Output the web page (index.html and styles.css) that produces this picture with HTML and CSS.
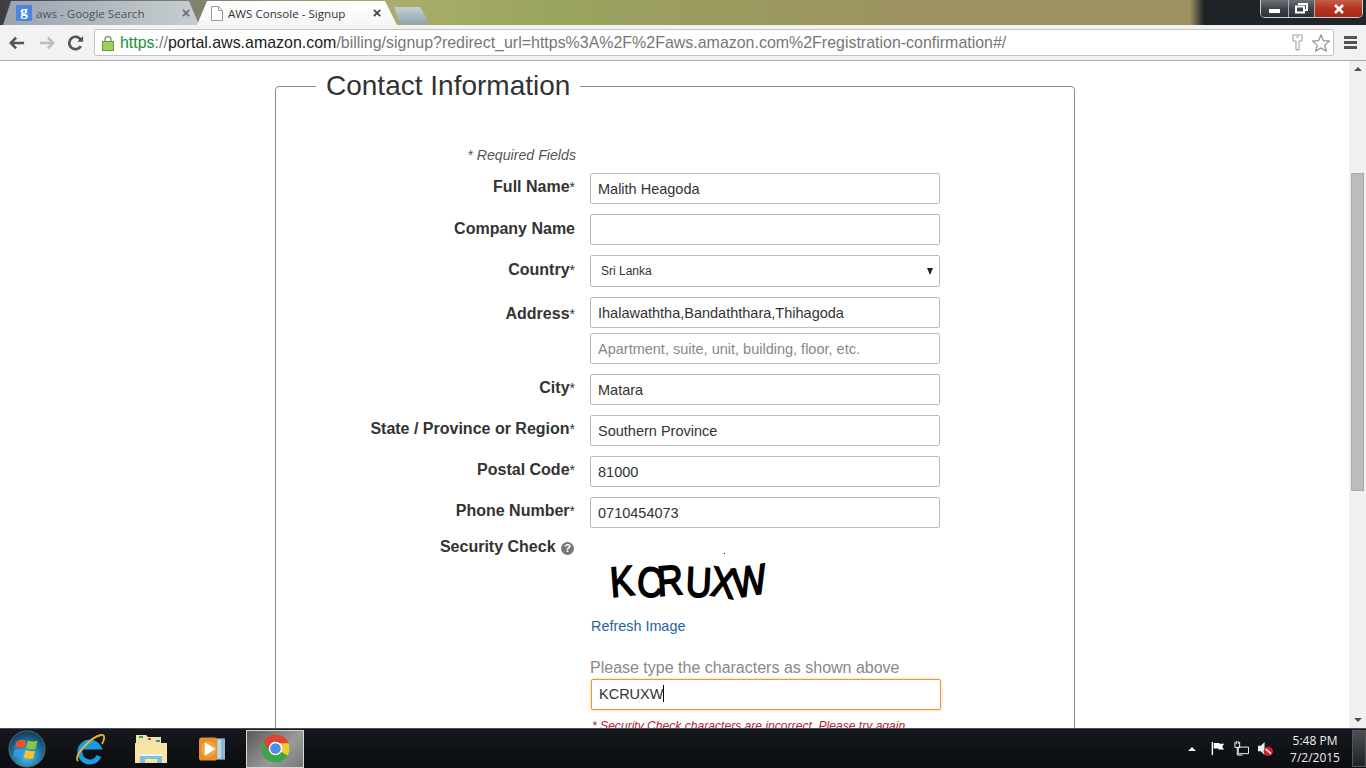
FILE: index.html
```html
<!DOCTYPE html>
<html lang="en">
<head>
  <meta charset="UTF-8" />
  <title>AWS Console - Signup</title>
  <link rel="stylesheet" href="styles.css">
</head>
<body>
  <div class="tabstrip">
    <div class="tab tab-off">
      <span class="favicon">g</span>
      <span class="tab-title">aws - Google Search</span>
      <svg class="tab-x" viewBox="0 0 10 10"><path d="M1 1l7 7M8 1l-7 7" stroke="#6b6f73" stroke-width="2"/></svg>
    </div>
    <div class="tab tab-on">
      <svg class="doc" viewBox="0 0 12 15"><path d="M.5.5h7l4 4v10H.5z" fill="#fff" stroke="#9a9a9a"/><path d="M7.5.5v4h4" fill="none" stroke="#9a9a9a"/></svg>
      <span class="tab-title">AWS Console - Signup</span>
      <svg class="tab-x" viewBox="0 0 10 10"><path d="M1 1l7 7M8 1l-7 7" stroke="#444" stroke-width="2"/></svg>
    </div>
    <div class="tab-new"></div>
    <div class="winbtns">
      <span class="winbtn win-min"><i></i></span>
      <span class="winbtn win-max"><svg width="13" height="11" viewBox="0 0 13 11"><path d="M4 2V1h8v6h-2M1 3.500h8v6H1z" fill="none" stroke="#fff" stroke-width="2"/></svg></span>
      <span class="winbtn win-close"><svg width="12" height="10" viewBox="0 0 12 10"><path d="M2 1l8 8M10 1l-8 8" stroke="#fff" stroke-width="2.600"/></svg></span>
    </div>
  </div>

  <div class="toolbar">
    <svg class="nav" viewBox="0 0 18 16"><path d="M8 2L2 8l6 6M2 8h15" fill="none" stroke="#555" stroke-width="3"/></svg>
    <svg class="nav" viewBox="0 0 18 16"><path d="M10 2l6 6-6 6M16 8H1" fill="none" stroke="#bdbdbd" stroke-width="3"/></svg>
    <svg class="nav" viewBox="0 0 18 18"><path d="M14.500 12.500a7 7 0 1 1 0-7" fill="none" stroke="#555" stroke-width="3"/><path d="M10.500 7.500H17V1z" fill="#555"/></svg>
    <div class="omnibox">
      <svg class="lock" viewBox="0 0 12 16"><path d="M3 7V4.500a3 3 0 0 1 6 0V7" fill="none" stroke="#8a9a7a" stroke-width="1.500"/><rect x=".5" y="6.500" width="11" height="9" fill="#9bd05a" stroke="#6c9a3c"/></svg>
      <span class="url"><span class="https">https</span><span class="url-dim">://</span>portal.aws.amazon.com<span class="url-dim">/billing/signup?redirect_url=https%3A%2F%2Faws.amazon.com%2Fregistration-confirmation#/</span></span>
      <svg class="key" viewBox="0 0 11 17"><path d="M1 1h9v6H7v9H4V7H1z" fill="#fff" stroke="#999"/><path d="M4 3h3" stroke="#999"/></svg>
      <svg class="star" viewBox="0 0 18 18"><path d="M9 1l2.400 5.600 6 .5-4.600 4 1.400 6L9 14l-5.200 3.100 1.400-6-4.600-4 6-.5z" fill="#fff" stroke="#8f8f8f" stroke-width="1.200"/></svg>
    </div>
    <div class="menu"><i></i><i></i><i></i></div>
  </div>

  <div class="viewport">
    <div class="page">
      <fieldset class="contact">
        <legend>Contact Information</legend>
        <p class="required">* Required Fields</p>

        <div class="row">
          <label>Full Name<small>*</small></label>
          <input class="field" type="text" value="Malith Heagoda">
        </div>
        <div class="row">
          <label class="label-low">Company Name</label>
          <input class="field" type="text">
        </div>
        <div class="row">
          <label class="label-low">Country<small>*</small></label>
          <div class="field field-select">Sri Lanka<span class="caret-down"></span></div>
        </div>
        <div class="row row-tight">
          <label class="label-address">Address<small>*</small></label>
          <input class="field" type="text" value="Ihalawaththa,Bandaththara,Thihagoda">
        </div>
        <div class="row">
          <label></label>
          <input class="field" type="text" placeholder="Apartment, suite, unit, building, floor, etc.">
        </div>
        <div class="row">
          <label>City<small>*</small></label>
          <input class="field" type="text" value="Matara">
        </div>
        <div class="row">
          <label>State / Province or Region<small>*</small></label>
          <input class="field" type="text" value="Southern Province">
        </div>
        <div class="row">
          <label>Postal Code<small>*</small></label>
          <input class="field" type="text" value="81000">
        </div>
        <div class="row">
          <label>Phone Number<small>*</small></label>
          <input class="field" type="text" value="0710454073">
        </div>
        <div class="row">
          <label class="label-check">Security Check <span class="help">?</span></label>
          <div class="check">
            <svg class="captcha" viewBox="0 0 200 70">
              <circle cx="134.500" cy="15.500" r=".6" fill="#000"/>
              <text transform="scale(.85 1)" y="59 57 58 58 57 60" stroke="#000" stroke-width="1.800" x="25 54 80 112 141 170" rotate="-5 6 -4 3 8 -8">KCRUXW</text>
            </svg>
            <a class="refresh" href="#">Refresh Image</a>
            <div class="prompt">Please type the characters as shown above</div>
            <div class="field field-focus">KCRUXW<span class="text-caret"></span></div>
            <div class="error">* Security Check characters are incorrect. Please try again.</div>
          </div>
        </div>
      </fieldset>
    </div>
    <div class="scrollbar">
      <span class="arrow arrow-up"></span>
      <div class="thumb"></div>
      <span class="arrow arrow-down"></span>
    </div>
  </div>

  <div class="taskbar">
    <svg class="orb" viewBox="0 0 40 40">
      <defs>
        <radialGradient id="orbFill" cy=".7" r=".7"><stop offset="0" stop-color="#4cc4e8"/><stop offset=".6" stop-color="#1a6f9e"/><stop offset="1" stop-color="#12344f"/></radialGradient>
      </defs>
      <circle cx="20" cy="20" r="19" fill="url(#orbFill)" stroke="#5b6b78"/>
      <path d="M9 12q5-3 10-1l-2 8q-5-2-10 0z" fill="#e8552c"/>
      <path d="M21 11q5 2 10 0l-2 9q-5 1-10-1z" fill="#8cc63f"/>
      <path d="M7 21q5-2 9.500 0l-2 8q-5-2-9.500 0z" fill="#2f9be0"/>
      <path d="M18.500 21q5 2 10 1l-2 8q-5 1-10-1z" fill="#fbc02d"/>
    </svg>
    <svg class="tb-icon tb-ie" viewBox="0 0 30 32">
      <path d="M24 23a10 10 0 1 1-.5-9H7.500" fill="none" stroke="#1b9ae0" stroke-width="5"/>
      <path d="M3 28C-2 23 16 4 26 2c5-1 3 6 1 9" fill="none" stroke="#e8b82c" stroke-width="1.800"/>
    </svg>
    <svg class="tb-icon tb-folder" viewBox="0 0 32 30">
      <path d="M1 1h10l2 2h13v8H1z" fill="#f0e2a8"/>
      <rect x="4" y="2" width="4" height="2" fill="#3aa655"/>
      <rect x="13" y="4" width="3" height="2" fill="#c8502c"/>
      <rect x="21" y="6" width="4" height="2" fill="#3a8ec8"/>
      <path d="M0 9h32v20H0z" fill="#f6e4a0"/>
      <path d="M5 29v-8h22v8h-5v-4H10v4z" fill="#86bcdc"/>
      <path d="M5 21h22" stroke="#e4f4fc" stroke-width="2"/>
    </svg>
    <svg class="tb-icon tb-media" viewBox="0 0 27 26">
      <rect x="15" y="2" width="12" height="22" fill="#8bb6d6"/>
      <rect x="15" y="3" width="8" height="20" fill="#bcd8ec"/>
      <rect x="0" y="1" width="19" height="24" rx="3" fill="#e8912c"/>
      <circle cx="10" cy="13" r="8" fill="#f4a63c"/>
      <path d="M6 6l11 7-11 7z" fill="#fff"/>
    </svg>
    <div class="tb-active">
      <svg class="tb-chrome" viewBox="0 0 30 30">
        <circle cx="15" cy="15" r="14.500" fill="#3aa648"/>
        <path d="M15 .5a14.500 14.500 0 0 1 12.600 21.700L15 15z" fill="#f6c92c"/>
        <path d="M2.400 7.800A14.500 14.500 0 0 1 28.500 9.500H15L8.500 18z" fill="#dc4437"/>
        <circle cx="15" cy="15" r="7" fill="#fff"/>
        <circle cx="15" cy="15" r="5.500" fill="#4b8bea"/>
      </svg>
    </div>
    <div class="tray">
      <span class="tray-up"></span>
      <svg class="tray-icon" viewBox="0 0 16 16"><path d="M2.500 1v14" stroke="#fff" stroke-width="1.500"/><path d="M4 2h6v1h5l-2 3 2 3H9V8H4z" fill="#fff"/></svg>
      <svg class="tray-icon" viewBox="0 0 16 16"><path d="M4.500 6.500h11v7h-11zM1 1v6h5V1M2.500 0v3M4.500 0v3M3.500 7v8H9" fill="none" stroke="#fff"/></svg>
      <svg class="tray-icon" viewBox="0 0 16 16"><path d="M0 5h3l4-4v14l-4-4H0z" fill="#eee"/><circle cx="11" cy="11" r="5" fill="#d4202a"/><path d="M8 8.500l6 5" stroke="#fff" stroke-width="1.500"/></svg>
      <div class="clock"><span>5:48 PM</span><span>7/2/2015</span></div>
      <div class="show-desktop"></div>
    </div>
  </div>
</body>
</html>
```

FILE: styles.css
```css
* {
  box-sizing: border-box;
}
html, body {
  margin: 0;
  height: 100%;
  overflow: hidden;
}
body {
  display: flex;
  flex-direction: column;
  width: 1366px;
  height: 768px;
  font-family: "Liberation Sans", Arial, sans-serif;
  color: #333;
  background: #fff;
}

/* tab strip */
.tabstrip {
  display: flex;
  align-items: flex-end;
  flex: none;
  height: 25px;
  padding-left: 3px;
  background: linear-gradient(to right, #3b3d40 0, #6e7270 120px, #a9ad6c 400px, #9aa35f 560px, #9c9360 900px, #9d9160 1190px, #1d2227 1204px, #20262b 1366px);
}
.tab {
  display: flex;
  align-items: center;
  height: 24px;
  font-family: "Open Sans", "Noto Sans", sans-serif;
  font-size: 11.600px;
  white-space: nowrap;
}
.tab-off {
  width: 196px;
  padding: 0 8px 0 13px;
  color: #555;
  background: linear-gradient(to right, #9aa3b0, #c7ced1);
  clip-path: polygon(0 100%, 8px 0, 186px 0, 100% 100%);
}
.tab-on {
  width: 200px;
  margin-left: -2px;
  padding: 0 15px 0 14px;
  color: #333;
  background: linear-gradient(#fff, #f6f6f6);
  clip-path: polygon(0 100%, 10px 0, 188px 0, 100% 100%);
}
.favicon {
  width: 16px;
  height: 16px;
  margin-right: 4px;
  border-radius: 1px;
  font: bold 15px/13px "Liberation Serif", serif;
  text-align: center;
  color: #fff;
  background: #4a86e0;
}
.doc {
  width: 12px;
  height: 15px;
  margin-right: 5px;
}
.tab-title {
  flex: 1;
}
.tab-x {
  width: 9px;
  height: 9px;
}
.tab-new {
  width: 36px;
  height: 17px;
  margin: 0 0 1px -3px;
  background: linear-gradient(#c4d0d6, #8ea6ae);
  clip-path: polygon(6px 100%, 0 0, 26px 0, 100% 100%);
}
.winbtns {
  display: flex;
  align-self: flex-start;
  height: 18px;
  margin: 0 3px 0 auto;
  border: 1px solid #c8cdd2;
  border-top: 0;
  border-radius: 0 0 5px 5px;
  overflow: hidden;
}
.winbtn {
  display: flex;
  align-items: center;
  justify-content: center;
  height: 100%;
  background: linear-gradient(#6b7177, #3f454b 50%, #2b3035);
}
.win-min {
  width: 28px;
  border-right: 1px solid #aab;
}
.win-min i {
  width: 11px;
  height: 4px;
  margin-top: 4px;
  background: #fff;
}
.win-max {
  width: 26px;
  border-right: 1px solid #aab;
}
.win-close {
  width: 47px;
  background: linear-gradient(#c2604c, #b83220 50%, #a82a18);
}

/* address bar row */
.toolbar {
  display: flex;
  align-items: center;
  flex: none;
  height: 36px;
  padding: 0 9px;
  background: #f2f2f2;
  border-bottom: 1px solid #a8a8a8;
}
.nav {
  flex: none;
  width: 16px;
  height: 16px;
  margin-right: 14px;
}
.nav:nth-child(2) {
  margin-right: 13px;
}
.nav:nth-child(3) {
  margin-right: 10px;
}
.omnibox {
  display: flex;
  align-items: center;
  flex: none;
  width: 1240px;
  height: 27px;
  padding: 0 3px 0 7px;
  background: #fff;
  border: 1px solid #c4c4c4;
  border-radius: 2px;
}
.lock {
  width: 12px;
  height: 16px;
  margin-right: 6px;
}
.url {
  flex: 1;
  font-size: 15.960px;
  white-space: nowrap;
  color: #222;
}
.https {
  color: #1f8f3a;
}
.url-dim {
  color: #777;
}
.key {
  width: 11px;
  height: 17px;
  margin-right: 9px;
}
.star {
  width: 18px;
  height: 18px;
}
.menu {
  display: flex;
  flex-direction: column;
  gap: 2px;
  margin-left: 10px;
}
.menu i {
  width: 13px;
  height: 3px;
  background: #555;
}

/* page */
.viewport {
  display: flex;
  flex: 1;
  min-height: 0;
}
.page {
  flex: 1;
  overflow: hidden;
  background: #fff;
}
.contact {
  width: 800px;
  margin: 9px 0 0 275px;
  padding: 0 0 40px;
  border: 1px solid #8c8c8c;
  border-radius: 4px;
}
.contact legend {
  margin-left: 40px;
  padding: 0 10px;
  font-size: 28px;
  line-height: 32px;
  font-weight: normal;
}
.required {
  width: 300px;
  margin: 43px 0 8px;
  font-size: 14.200px;
  line-height: 20px;
  font-style: italic;
  text-align: right;
  color: #555;
}
.row {
  display: flex;
  gap: 15px;
  margin-bottom: 10px;
}
.row-tight {
  margin-bottom: 5px;
}
.row label {
  flex: none;
  width: 299px;
  padding-top: 4px;
  font-size: 16px;
  line-height: 20px;
  font-weight: bold;
  text-align: right;
}
.row small {
  font-size: 14px;
  font-weight: normal;
}
.row .label-low {
  padding-top: 5px;
}
.row .label-address {
  padding-top: 7px;
}
.row .label-check {
  padding: 1px 1px 0 0;
  line-height: 16px;
}
.help {
  display: inline-block;
  width: 13px;
  height: 13px;
  margin-left: 1px;
  border-radius: 50%;
  font-size: 11px;
  line-height: 13px;
  text-align: center;
  color: #fff;
  background: #777;
}
.field {
  display: block;
  width: 350px;
  height: 31px;
  padding: 0 7px;
  font-family: inherit;
  font-size: 14.500px;
  line-height: 29px;
  color: #333;
  background: #fff;
  border: 1px solid #bbb;
  border-radius: 2px;
  outline: none;
}
.field::placeholder {
  color: #888;
  opacity: 1;
}
.field-select {
  position: relative;
  height: 32px;
  padding-left: 10px;
  font-size: 12px;
  line-height: 31px;
}
.caret-down {
  position: absolute;
  top: 12px;
  right: 6px;
  border: 3.500px solid transparent;
  border-top: 7px solid #222;
  border-bottom: 0;
}
.check {
  display: flex;
  flex-direction: column;
  align-items: flex-start;
}
.captcha {
  width: 200px;
  height: 70px;
  font-family: "Liberation Sans", sans-serif;
  font-size: 42px;
}
.refresh {
  margin: 8px 0 0 1px;
  font-size: 14.400px;
  line-height: 20px;
  color: #2a5f9e;
  text-decoration: none;
}
.prompt {
  margin-top: 22px;
  font-size: 16px;
  line-height: 20px;
  color: #888;
}
.field-focus {
  margin: 1px 0 0 1px;
  border-color: #e59a3c;
  box-shadow: 0 0 3px #f0c080;
}
.text-caret {
  display: inline-block;
  width: 1px;
  height: 17px;
  vertical-align: -3px;
  background: #000;
}
.error {
  margin: 6px 0 0 2px;
  font-size: 12.100px;
  line-height: 20px;
  font-style: italic;
  color: #b3262a;
}

/* scrollbar */
.scrollbar {
  display: flex;
  flex-direction: column;
  align-items: center;
  flex: none;
  width: 17px;
  background: #f0f0f0;
}
.arrow {
  flex: none;
  border: 4px solid transparent;
}
.arrow-up {
  margin-top: 6px;
  border-bottom: 4px solid #505050;
  border-top: 0;
}
.thumb {
  flex: none;
  width: 13px;
  height: 318px;
  margin-top: 102px;
  background: #bcbcbc;
  border: 1px solid #a8a8a8;
}
.arrow-down {
  margin-top: auto;
  margin-bottom: 6px;
  border-top: 4px solid #505050;
  border-bottom: 0;
}

/* windows taskbar */
.taskbar {
  display: flex;
  align-items: center;
  flex: none;
  height: 40px;
  padding-left: 8px;
  background: linear-gradient(#15191d, #0b0d10);
  border-top: 1px solid #4a5056;
}
.orb {
  width: 38px;
  height: 38px;
}
.tb-icon {
  flex: none;
}
.tb-ie {
  width: 30px;
  height: 32px;
  margin-left: 29px;
}
.tb-folder {
  width: 32px;
  height: 30px;
  margin-left: 30px;
}
.tb-media {
  width: 26px;
  height: 26px;
  margin-left: 32px;
}
.tb-active {
  display: flex;
  align-items: center;
  justify-content: center;
  width: 58px;
  height: 38px;
  margin-left: 21px;
  background: linear-gradient(135deg, #5a5a5a, #9a9a9a 60%, #777);
  border: 1px solid #d8d8d8;
}
.tb-chrome {
  width: 29px;
  height: 29px;
}
.tray {
  display: flex;
  align-items: center;
  height: 100%;
  margin-left: auto;
}
.tray-up {
  margin-right: 14px;
  border: 4px solid transparent;
  border-bottom: 4px solid #eee;
  border-top: 0;
}
.tray-icon {
  width: 15px;
  height: 15px;
  margin-right: 9px;
}
.clock {
  display: flex;
  flex-direction: column;
  align-items: center;
  width: 74px;
  margin-left: -4px;
  font-family: "Open Sans", "Noto Sans", sans-serif;
  font-size: 12px;
  line-height: 17px;
  color: #eee;
}
.show-desktop {
  width: 14px;
  height: 37px;
  background: linear-gradient(#4a4f55, #1e2226);
  border: 1px solid #555;
}
```
